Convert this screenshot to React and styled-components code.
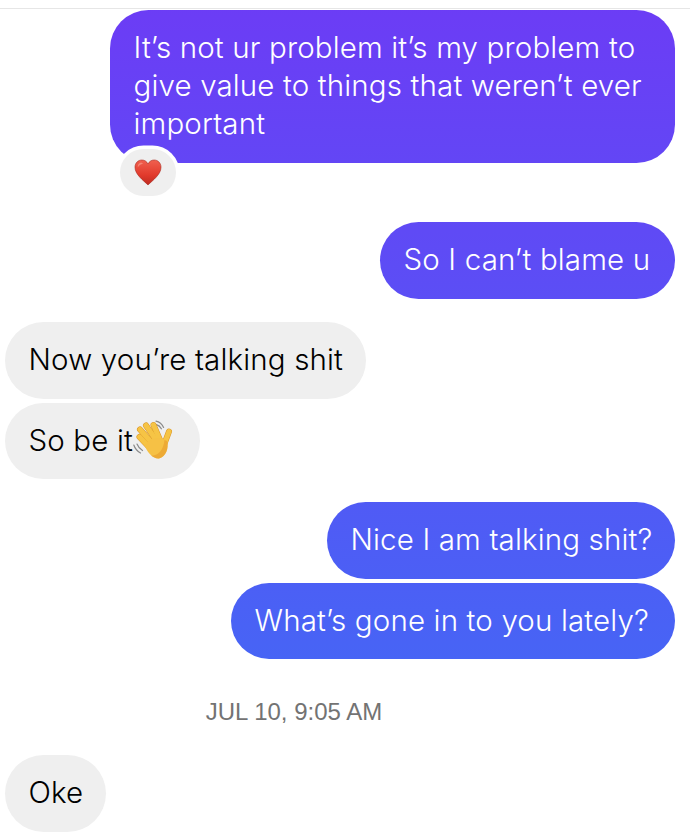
import React from "react";
import styled, { createGlobalStyle } from "styled-components";

const Global = createGlobalStyle`
  html, body { margin: 0; padding: 0; background: #fff; }
  body { width: 690px; height: 832px; overflow: hidden; }
`;

const Thread = styled.main`
  box-sizing: border-box;
  width: 690px;
  height: 832px;
  overflow: hidden;
  padding: 0 15px 0 5px;
  font-family: Inter, "Liberation Sans", sans-serif;
  display: flex;
  flex-direction: column;
`;

const TopRule = styled.div`
  height: 1px;
  margin: 8px -15px 1px -5px;
  background: #e6e6e6;
  flex: none;
`;

const Row = styled.div`
  display: flex;
  flex: none;
  justify-content: ${(p) => (p.$mine ? "flex-end" : "flex-start")};
  margin-top: ${(p) => p.$gap || 0}px;
`;

const Bubble = styled.div`
  position: relative;
  box-sizing: border-box;
  width: ${(p) => p.$width}px;
  height: ${(p) => (p.$lines ? 39 + p.$lines * 38 : p.$height || 77)}px;
  padding: 18px 0 0 23.5px;
  border-radius: 38.5px;
  font-size: 29.5px;
  font-weight: 360;
  line-height: 38px;
  letter-spacing: 0.15px;
  color: ${(p) => (p.$mine ? "#fff" : "#000")};
  background: ${(p) =>
    p.$mine ? "linear-gradient(180deg, #6c3cf5 0px, #4764f5 660px) fixed" : "#efefef"};
  white-space: pre-line;
`;

const Reaction = styled.div`
  position: absolute;
  left: 10px;
  bottom: -33px;
  width: 56px;
  height: 47px;
  border-radius: 24px;
  background: #efefef;
  box-shadow: 0 0 0 3.5px #fff;
  display: flex;
  align-items: center;
  justify-content: center;
`;

const InlineEmoji = styled.svg`
  display: inline-block;
  width: 40px;
  height: 40px;
  margin: -10px -1px -10px 0;
  vertical-align: 1px;
`;

const HeartIcon = styled.svg`
  width: 28px;
  height: 27px;
`;

const Stamp = styled.div`
  flex: none;
  margin-top: 40px;
  margin-left: -5px;
  width: 588px;
  text-align: center;
  font-family: "Liberation Sans", Arial, sans-serif;
  font-size: 24px;
  line-height: 26px;
  color: #737373;
`;

const Heart = () => (
  <HeartIcon viewBox="0 0 28 27" aria-label="heart">
    <defs>
      <linearGradient id="hg" x1="0" y1="0" x2="0" y2="1">
        <stop offset="0" stopColor="#f0604f" />
        <stop offset="0.6" stopColor="#e23a2c" />
        <stop offset="1" stopColor="#bd2a20" />
      </linearGradient>
    </defs>
    <path
      d="M14 26 C9 21 1 15.5 1 8.2 C1 3.8 4.3 1 7.8 1 C10.5 1 12.8 2.4 14 5 C15.2 2.4 17.5 1 20.2 1 C23.7 1 27 3.8 27 8.2 C27 15.5 19 21 14 26 Z"
      fill="url(#hg)"
      stroke="#a82a20"
      strokeWidth="0.6"
    />
    <path d="M7 3.5 C4.8 4 3.4 6 3.8 8.4 C5 6.4 6.6 5.2 9 4.8 C8.6 4 7.8 3.6 7 3.5 Z" fill="#f9a08f" opacity="0.65" />
  </HeartIcon>
);

const FINGERS = [
  "M6.5 17 L17 28",
  "M7 9.5 L19 23",
  "M13 5.5 L23 20",
  "M20.5 5 L27 20",
  "M36 11.5 L31 25",
];

const Wave = () => (
  <InlineEmoji viewBox="0 0 40 40" aria-label="waving hand">
    <g fill="none" stroke="#8a8a8a" strokeWidth="1.2" strokeLinecap="round">
      <path d="M0.8 25 C1.8 28 4 31 7.5 33" />
      <path d="M4 24 C5 26.5 6.8 29 9.5 30.5" />
      <path d="M23 1.2 C26 1.8 29 4 30.6 7.5" />
      <path d="M23.5 4.6 C25.6 5.2 27.2 6.6 28.4 8.8" />
    </g>
    <g fill="none" strokeLinecap="round">
      {FINGERS.map((d) => (
        <path key={d} d={d} stroke="#d9962a" strokeWidth="6" />
      ))}
      {FINGERS.map((d) => (
        <path key={`${d}f`} d={d} stroke="#f6c445" strokeWidth="5" />
      ))}
    </g>
    <path
      d="M15 22 C19 17 29 17 34 21 C36 28 33 37 26 38.4 C20 39.2 14 32 11.5 25 Z"
      fill="#f6c145"
    />
    <path d="M34 21 C36 28 33 37 26 38.4 C23.4 38.7 20.6 37.6 18 35.6 C25 36.2 30.5 30 31.5 20 Z" fill="#e9a130" opacity="0.75" />
  </InlineEmoji>
);

export default function App() {
  return (
    <>
      <Global />
      <Thread>
        <TopRule />
        <Row $mine>
          <Bubble $mine $width={565} $lines={3}>
            {"It’s not ur problem it’s my problem to\ngive value to things that weren’t ever\nimportant"}
            <Reaction>
              <Heart />
            </Reaction>
          </Bubble>
        </Row>
        <Row $mine $gap={59}>
          <Bubble $mine $width={295}>So I can’t blame u</Bubble>
        </Row>
        <Row $gap={23}>
          <Bubble $width={361}>Now you’re talking shit</Bubble>
        </Row>
        <Row $gap={4}>
          <Bubble $width={195} $height={76}>
            So be it
            <Wave />
          </Bubble>
        </Row>
        <Row $mine $gap={23}>
          <Bubble $mine $width={348}>Nice I am talking shit?</Bubble>
        </Row>
        <Row $mine $gap={4}>
          <Bubble $mine $width={444} $height={76}>What’s gone in to you lately?</Bubble>
        </Row>
        <Stamp>JUL 10, 9:05 AM</Stamp>
        <Row $gap={30}>
          <Bubble $width={101}>Oke</Bubble>
        </Row>
      </Thread>
    </>
  );
}
